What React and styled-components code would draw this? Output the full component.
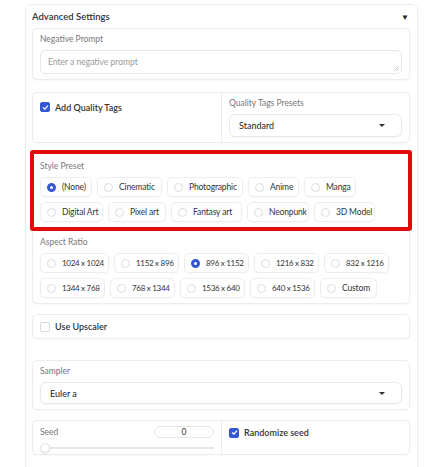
import React from 'react'
import styled, { createGlobalStyle } from 'styled-components'

const GlobalStyle = createGlobalStyle`
  html, body {
    margin: 0;
    padding: 0;
    background: #ffffff;
  }
  body {
    font-family: 'Lato', 'Liberation Sans', sans-serif;
    color: #333;
  }
`

const Page = styled.div`
  padding: 4px 22px 0 25px;
  height: 467px;
  box-sizing: border-box;
  overflow: hidden;
`

const Panel = styled.div`
  border: 1px solid #eeeeee;
  border-radius: 6px;
  padding: 0 7px 20px 6px;
  box-shadow: 0 1px 3px rgba(0,0,0,0.03);
`

const Header = styled.div`
  height: 23px;
  display: flex;
  align-items: center;
  justify-content: space-between;
  font-size: 9.5px;
  font-weight: 600;
  color: #333;
  padding-right: 1px;
`

const Caret = styled.span`
  font-size: 8px;
  color: #222;
`

const Block = styled.div`
  margin-top: ${p => p.$top || 0}px;
  border: 1px solid #ececec;
  border-radius: 5px;
  background: #fff;
  box-shadow: 0 1px 2px rgba(0,0,0,0.03);
  padding: ${p => p.$split ? '0' : '4px 7px 5px 7px'};
  display: ${p => p.$split ? 'grid' : 'flex'};
  grid-template-columns: 188px 1fr;
  flex-direction: column;
  gap: ${p => p.$split ? 0 : 5}px;
`

const Highlight = styled.div`
  margin: 7px -2px 0 -2px;
  border: 4px solid #e30a0a;
  border-radius: 3px;
  padding: 6px 6px 5px 6px;
  display: flex;
  flex-direction: column;
  gap: 5px;
  position: relative;
  z-index: 1;
  background: #fff;
`

const Cell = styled.div`
  padding: 4px 7px 5px 7px;
  display: flex;
  flex-direction: column;
  gap: 5px;
  border-left: ${p => p.$divider ? '1px solid #ececec' : 'none'};
`

const Label = styled.div`
  font-size: 8.5px;
  line-height: 12px;
  color: #777;
`

const TextArea = styled.div`
  height: 24px;
  box-sizing: border-box;
  border: 1px solid #e6e6e6;
  border-radius: 5px;
  padding: 0 7px;
  display: flex;
  align-items: center;
  font-size: 8.5px;
  color: #9a9a9a;
  position: relative;
`

const Grip = styled.svg`
  position: absolute;
  right: 2px;
  bottom: 2px;
`

const Select = styled.div`
  height: ${p => p.$h || 23}px;
  box-sizing: border-box;
  border: 1px solid #e8e8e8;
  border-radius: 6px;
  box-shadow: 0 1px 2px rgba(0,0,0,0.04);
  display: flex;
  align-items: center;
  justify-content: space-between;
  padding: 0 16px 0 9px;
  font-size: 9px;
  color: #222;
`

const Arrow = styled.span`
  width: 0;
  height: 0;
  border-left: 3px solid transparent;
  border-right: 3px solid transparent;
  border-top: 3px solid #333;
`

const CheckRow = styled.div`
  display: flex;
  align-items: center;
  gap: 5px;
  font-size: 9px;
  font-weight: 600;
  color: #333;
  height: ${p => p.$h || 'auto'};
`

const Box = styled.span`
  width: 10px;
  height: 10px;
  box-sizing: border-box;
  border-radius: 2px;
  background: ${p => p.$on ? '#3557d4' : '#fff'};
  border: 1px solid ${p => p.$on ? '#3557d4' : '#d9d9d9'};
  display: flex;
  align-items: center;
  justify-content: center;
`

const Row = styled.div`
  display: flex;
  gap: 5px;
`

const Choice = styled.div`
  width: ${p => p.$w}px;
  height: 20px;
  box-sizing: border-box;
  border: 1px solid #ededed;
  border-radius: 5px;
  box-shadow: 0 1px 2px rgba(0,0,0,0.03);
  display: flex;
  align-items: center;
  gap: 6px;
  padding: 0 0 0 6px;
  font-size: ${p => p.$tight ? 8 : 8.5}px;
  letter-spacing: ${p => p.$tight ? -0.3 : -0.15}px;
  color: #333;
  white-space: nowrap;
`

const Dot = styled.span`
  width: 9px;
  height: 9px;
  flex-shrink: 0;
  box-sizing: border-box;
  border-radius: 50%;
  border: ${p => p.$on ? '3px solid #3557d4' : '1px solid #dcdcdc'};
  background: #fff;
`

const SeedTop = styled.div`
  display: flex;
  justify-content: space-between;
  align-items: center;
`

const NumberBox = styled.div`
  width: 60px;
  height: 12px;
  box-sizing: border-box;
  border: 1px solid #e6e6e6;
  border-radius: 6px;
  font-size: 8.5px;
  display: flex;
  align-items: center;
  justify-content: center;
  color: #333;
`

const Track = styled.div`
  height: 2px;
  background: #e6e6e6;
  border-radius: 1px;
  position: relative;
  margin-top: 4px;
`

const Thumb = styled.span`
  position: absolute;
  left: 0;
  top: -4px;
  width: 10px;
  height: 10px;
  box-sizing: border-box;
  border-radius: 50%;
  background: #fff;
  border: 1px solid #e3e3e3;
  box-shadow: 0 1px 2px rgba(0,0,0,0.1);
`

const Tick = () => (
  <svg width="7" height="7" viewBox="0 0 10 10">
    <path d="M2 5.2 L4.2 7.4 L8.2 2.8" fill="none" stroke="#fff" strokeWidth="1.8" strokeLinecap="round" strokeLinejoin="round" />
  </svg>
)

const styleRows = [
  [['(None)', 52], ['Cinematic', 65], ['Photographic', 76], ['Anime', 51], ['Manga', 52]],
  [['Digital Art', 63], ['Pixel art', 58], ['Fantasy art', 71], ['Neonpunk', 62], ['3D Model', 61]],
]

const ratioRows = [
  [['1024 x 1024', 69], ['1152 x 896', 65], ['896 x 1152', 65], ['1216 x 832', 65], ['832 x 1216', 65]],
  [['1344 x 768', 65], ['768 x 1344', 65], ['1536 x 640', 65], ['640 x 1536', 65], ['Custom', 57]],
]

const Options = ({ rows, selected, tight }) => rows.map((row, i) => (
  <Row key={i}>
    {row.map(([o, w]) => (
      <Choice key={o} $w={w} $tight={tight && o !== 'Custom'}>
        <Dot $on={o === selected} />
        {o}
      </Choice>
    ))}
  </Row>
))

const App = () => {
  return (
    <Page>
      <GlobalStyle />
      <Panel>
        <Header>
          Advanced Settings
          <Caret>▼</Caret>
        </Header>

        <Block>
          <Label>Negative Prompt</Label>
          <TextArea>
            Enter a negative prompt
            <Grip width="5" height="5" viewBox="0 0 5 5">
              <path d="M0 5 L5 0 M2.5 5 L5 2.5" stroke="#aaa" strokeWidth="0.7" />
            </Grip>
          </TextArea>
        </Block>

        <Block $top={12} $split>
          <Cell>
            <CheckRow $h="20px">
              <Box $on><Tick /></Box>
              Add Quality Tags
            </CheckRow>
          </Cell>
          <Cell $divider>
            <Label>Quality Tags Presets</Label>
            <Select>Standard<Arrow /></Select>
          </Cell>
        </Block>

        <Highlight>
          <Label>Style Preset</Label>
          <Options rows={styleRows} selected="(None)" />
        </Highlight>

        <Block style={{ marginTop: -4, paddingTop: 8 }}>
          <Label>Aspect Ratio</Label>
          <Options rows={ratioRows} selected="896 x 1152" tight />
        </Block>

        <Block $top={10} style={{ height: 25, boxSizing: 'border-box', justifyContent: 'center', padding: '0 7px' }}>
          <CheckRow>
            <Box />
            Use Upscaler
          </CheckRow>
        </Block>

        <Block $top={21}>
          <Label>Sampler</Label>
          <Select $h={22}>Euler a<Arrow /></Select>
        </Block>

        <Block $top={10} $split>
          <Cell style={{ paddingTop: 5 }}>
            <SeedTop>
              <Label>Seed</Label>
              <NumberBox>0</NumberBox>
            </SeedTop>
            <Track><Thumb /></Track>
          </Cell>
          <Cell $divider style={{ paddingTop: 6 }}>
            <CheckRow>
              <Box $on><Tick /></Box>
              Randomize seed
            </CheckRow>
          </Cell>
        </Block>
      </Panel>
    </Page>
  )
}

export default App
